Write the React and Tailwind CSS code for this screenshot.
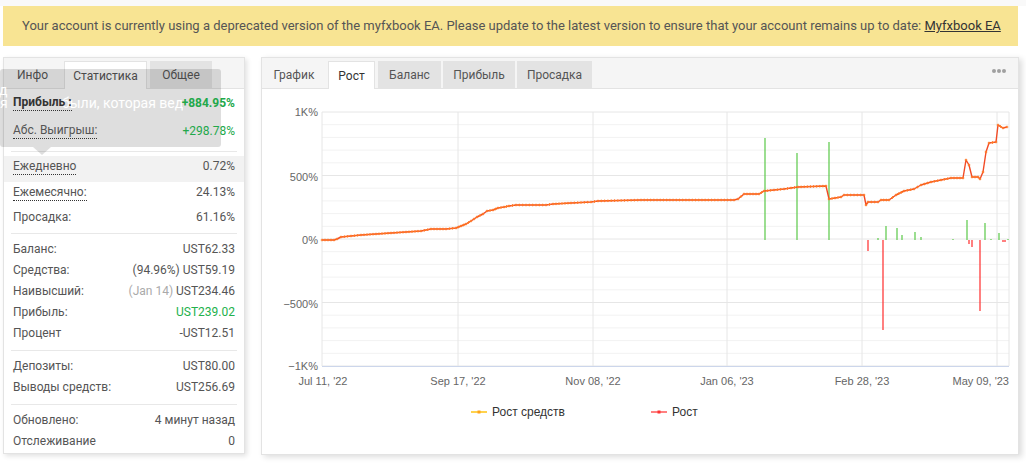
import React from "react";

const growthKeys = [
  [321, 240], [333, 240], [336, 239], [340, 237], [350, 236], [360, 235], [375, 234], [390, 233],
  [405, 232], [420, 231], [430, 229], [445, 229], [455, 228], [460, 226], [465, 224], [470, 221],
  [476, 217], [482, 214], [486, 211], [492, 210], [497, 208], [503, 207], [508, 206], [515, 205],
  [545, 205], [552, 204], [570, 203], [590, 202], [597, 201], [640, 200], [733, 200], [737, 199],
  [743, 194], [758, 194], [763, 191], [783, 189], [797, 187], [825, 186], [828, 199], [840, 197],
  [843, 195], [863, 195], [865, 205], [867, 202], [877, 202], [880, 200], [888, 200], [895, 195],
  [903, 191], [913, 189], [920, 185], [930, 182], [940, 180], [950, 178], [962, 178], [965, 160],
  [968, 165], [971, 177], [977, 177], [979, 179], [982, 172], [985, 152], [988, 143], [995, 142],
  [997, 125], [1002, 128], [1006, 127],
];

function resample(keys, step) {
  const pts = [];
  for (let i = 0; i < keys.length - 1; i++) {
    const [x0, y0] = keys[i];
    const [x1, y1] = keys[i + 1];
    const n = Math.max(1, Math.round((x1 - x0) / step));
    for (let k = 0; k < n; k++) {
      const t = k / n;
      pts.push([x0 + (x1 - x0) * t, y0 + (y1 - y0) * t]);
    }
  }
  pts.push(keys[keys.length - 1]);
  return pts;
}

const growthPts = resample(growthKeys, 3.2);

const greenBars = [
  [764, 138], [796, 153], [828, 142], [877, 238], [885, 226], [896, 228], [901, 235], [914, 232],
  [920, 237], [952, 239], [966, 220], [984, 223], [990, 239], [998, 233], [1007, 239],
];
const redBars = [
  [867, 251], [882, 330], [968, 244], [971, 247], [979, 311], [1002, 242], [1004, 242],
];

const yLabels = [
  ["1K%", 112], ["500%", 176.5], ["0%", 240], ["\u2212500%", 303.5], ["\u22121K%", 366],
];
const xGrid = [321, 457, 592, 726, 861, 996, 1008];
const xLabels = [
  ["Jul 11, '22", 322, "middle"], ["Sep 17, '22", 457, "middle"], ["Nov 08, '22", 592, "middle"],
  ["Jan 06, '23", 726, "middle"], ["Feb 28, '23", 861, "middle"], ["May 09, '23", 1008, "end"],
];

function Chart() {
  const minor = [];
  for (let i = 0; i <= 20; i++) minor.push(112 + i * 12.7);
  return (
    <svg width="757" height="365" viewBox="261 89 757 365" className="block">
      {minor.map((y, i) => (
        <line key={"m" + i} x1="321" x2="1008" y1={y} y2={y} stroke={i % 5 === 0 ? "#e6e6e6" : "#f2f2f2"} strokeWidth="1" />
      ))}
      {xGrid.map((x) => (
        <line key={"v" + x} x1={x} x2={x} y1="112" y2="366" stroke="#e6e6e6" strokeWidth="1" />
      ))}
      <line x1="321" x2="1008" y1="366.5" y2="366.5" stroke="#ccd6eb" strokeWidth="1" />
      {yLabels.map(([t, y]) => (
        <text key={t} x="317" y={y + 4} textAnchor="end" fontSize="11" fill="#666" fontFamily="'Liberation Sans', Arial, sans-serif">{t}</text>
      ))}
      {xLabels.map(([t, x, a]) => (
        <text key={t} x={x} y="385" textAnchor={a} fontSize="11" fill="#666" fontFamily="'Liberation Sans', Arial, sans-serif">{t}</text>
      ))}
      {greenBars.map(([x, t], i) => (
        <line key={"g" + i} x1={x} x2={x} y1={t} y2="240" stroke="#66cc55" strokeWidth="1.3" />
      ))}
      {redBars.map(([x, b], i) => (
        <line key={"r" + i} x1={x} x2={x} y1="240" y2={b} stroke="#ff3b3b" strokeWidth="1.3" />
      ))}
      <polyline points={growthKeys.map((p) => p.join(",")).join(" ")} fill="none" stroke="#f24a25" strokeWidth="1.4" strokeLinejoin="round" />
      {growthPts.map(([x, y], i) => (
        <g key={"p" + i}>
          <rect x={x - 1.3} y={y - 0.5} width="2.6" height="1" fill="#ff7a22" />
          <rect x={x - 0.5} y={y - 1.3} width="1" height="2.6" fill="#ff7a22" />
        </g>
      ))}
      <line x1="470" x2="486" y1="412" y2="412" stroke="#ffd24d" strokeWidth="2" />
      <rect x="476.5" y="410.5" width="3" height="3" fill="#ffa31a" />
      <text x="491" y="416" fontSize="12" fill="#333" fontFamily="'Liberation Sans', Arial, sans-serif">Рост средств</text>
      <line x1="650" x2="666" y1="412" y2="412" stroke="#ff8080" strokeWidth="2" />
      <rect x="656.5" y="410.5" width="3" height="3" fill="#ff3333" />
      <text x="671" y="416" fontSize="12" fill="#333" fontFamily="'Liberation Sans', Arial, sans-serif">Рост</text>
    </svg>
  );
}

function Row({ label, value, dotted, bold, valueClass = "text-[#555]", h = "h-[21px]", extra }) {
  return (
    <div className={`relative z-10 flex items-center justify-between ${h} px-[9px] leading-[16px]`}>
      <span className={`${bold ? "font-bold text-[#333]" : "text-[#555]"} ${dotted ? "border-b border-dotted border-[#333]" : ""}`}>{label}</span>
      <span className={valueClass}>
        {extra}
        {value}
      </span>
    </div>
  );
}

function Sep() {
  return <div className="mx-[7px] h-px bg-[#e8e8e8]" />;
}

export default function App() {
  return (
    <div className="relative w-[1026px] h-[464px] overflow-hidden bg-white font-['Roboto','Liberation_Sans',sans-serif] text-[12px]">
      <div className="h-[6px] bg-[#f9f9f9]" />
      <div className="mx-[3px] w-[1015px] h-[40px] bg-[#f8e493] flex items-center pl-[19px] text-[13px] text-[#555] whitespace-nowrap">
        <span>
          Your account is currently using a deprecated version of the myfxbook EA. Please update to the latest version to ensure that your account remains up to date:{" "}
          <span className="underline text-[#333]">Myfxbook EA</span>
        </span>
      </div>

      <div className="flex mt-[11px] gap-[16px] pl-[3px]">
        <div className="w-[242px] h-[397px] border border-[#e3e3e3] bg-white shadow-[2px_2px_5px_rgba(0,0,0,0.12)]">
          <div className="h-[31px] bg-[#f5f5f5] border-b border-[#e3e3e3] flex items-end gap-[3px] pl-0">
            <div className="h-[27px] w-[57px] flex items-center justify-center text-[#555]">Инфо</div>
            <div className="h-[28px] w-[83px] -mb-px bg-white border border-b-0 border-[#e3e3e3] flex items-center justify-center text-[#555]">Статистика</div>
            <div className="h-[27px] w-[62px] bg-[#e3e3e3] flex items-center justify-center text-[#555]">Общее</div>
          </div>
          <div className="h-[28px] relative z-10 flex items-center justify-between px-[9px]">
            <span className="font-bold text-[#333] border-b border-dotted border-[#333] leading-[15px]">Прибыль :</span>
            <span className="font-bold text-[#22a84a]">+884.95%</span>
          </div>
          <div className="h-[28px] relative z-10 flex items-center justify-between px-[9px]">
            <span className="text-[#555] border-b border-dotted border-[#333] leading-[15px]">Абс. Выигрыш:</span>
            <span className="text-[#22a84a]">+298.78%</span>
          </div>
          <div className="h-[6px]" />
          <Sep />
          <div className="h-[4px]" />
          <div className="h-[26px] bg-[#f2f2f2] flex items-start justify-between px-[9px] pt-[3px]">
            <span className="text-[#555] border-b border-dotted border-[#333] leading-[15px]">Ежедневно</span>
            <span className="text-[#555] leading-[15px]">0.72%</span>
          </div>
          <div className="h-[25px] flex items-start justify-between px-[9px] pt-[3px]">
            <span className="text-[#555] border-b border-dotted border-[#333] leading-[15px]">Ежемесячно:</span>
            <span className="text-[#555] leading-[15px]">24.13%</span>
          </div>
          <div className="h-[25px] flex items-start justify-between px-[9px] pt-[3px]">
            <span className="text-[#555] leading-[15px]">Просадка:</span>
            <span className="text-[#555] leading-[15px]">61.16%</span>
          </div>
          <div className="h-[1px]" />
          <Sep />
          <div className="h-[4px]" />
          <Row label="Баланс:" value="UST62.33" />
          <Row label="Средства:" value="UST59.19" extra={<span className="text-[#555]">(94.96%) </span>} />
          <Row label="Наивысший:" value="UST234.46" extra={<span className="text-[#aaa]">(Jan 14) </span>} />
          <Row label="Прибыль:" value="UST239.02" valueClass="text-[#22b14c]" />
          <Row label="Процент" value="-UST12.51" />
          <div className="h-[7px]" />
          <Sep />
          <div className="h-[4px]" />
          <Row label="Депозиты:" value="UST80.00" />
          <Row label="Выводы средств:" value="UST256.69" />
          <div className="h-[7px]" />
          <Sep />
          <div className="h-[4px]" />
          <Row label="Обновлено:" value="4 минут назад" />
          <Row label="Отслеживание" value="0" />
        </div>

        <div className="w-[758px] h-[398px] border border-[#e3e3e3] bg-white shadow-[3px_2px_6px_rgba(0,0,0,0.14)]">
          <div className="h-[31px] bg-[#f5f5f5] border-b border-[#e3e3e3] flex items-end justify-between">
            <div className="flex items-end gap-[2px] pl-0">
              <div className="h-[27px] w-[64px] flex items-center justify-center text-[#555]">График</div>
              <div className="h-[28px] w-[47px] -mb-px bg-white border border-b-0 border-[#e3e3e3] flex items-center justify-center text-[#333]">Рост</div>
              <div className="h-[27px] w-[63px] ml-[1px] bg-[#e3e3e3] flex items-center justify-center text-[#555]">Баланс</div>
              <div className="h-[27px] w-[72px] bg-[#e3e3e3] flex items-center justify-center text-[#555]">Прибыль</div>
              <div className="h-[27px] w-[75px] bg-[#e3e3e3] flex items-center justify-center text-[#555]">Просадка</div>
            </div>
            <div className="self-center flex gap-[1px] pr-[12px] pb-[5px]">
              <span className="w-[4px] h-[4px] rounded-full bg-[#a0a0a0]" />
              <span className="w-[4px] h-[4px] rounded-full bg-[#a0a0a0]" />
              <span className="w-[4px] h-[4px] rounded-full bg-[#a0a0a0]" />
            </div>
          </div>
          <Chart />
        </div>
      </div>

      <div className="absolute left-0 top-[69px] w-[221px] h-[78px] bg-[rgba(0,0,0,0.13)] rounded-[3px] overflow-hidden">
        <span className="absolute left-[-1px] top-[11px] text-[14px] leading-[20px] text-white">д</span>
        <span className="absolute left-0 top-[24px] text-[14px] leading-[20px] text-white">я</span>
        <span className="absolute left-[62px] top-[24px] w-[121px] overflow-hidden whitespace-nowrap text-[14px] leading-[20px] text-white">были, которая ведётся</span>
      </div>
      <div className="absolute left-[33px] top-[147px] w-0 h-0 border-l-[9px] border-r-[9px] border-t-[8px] border-l-transparent border-r-transparent border-t-[rgba(0,0,0,0.13)]" />
    </div>
  );
}
